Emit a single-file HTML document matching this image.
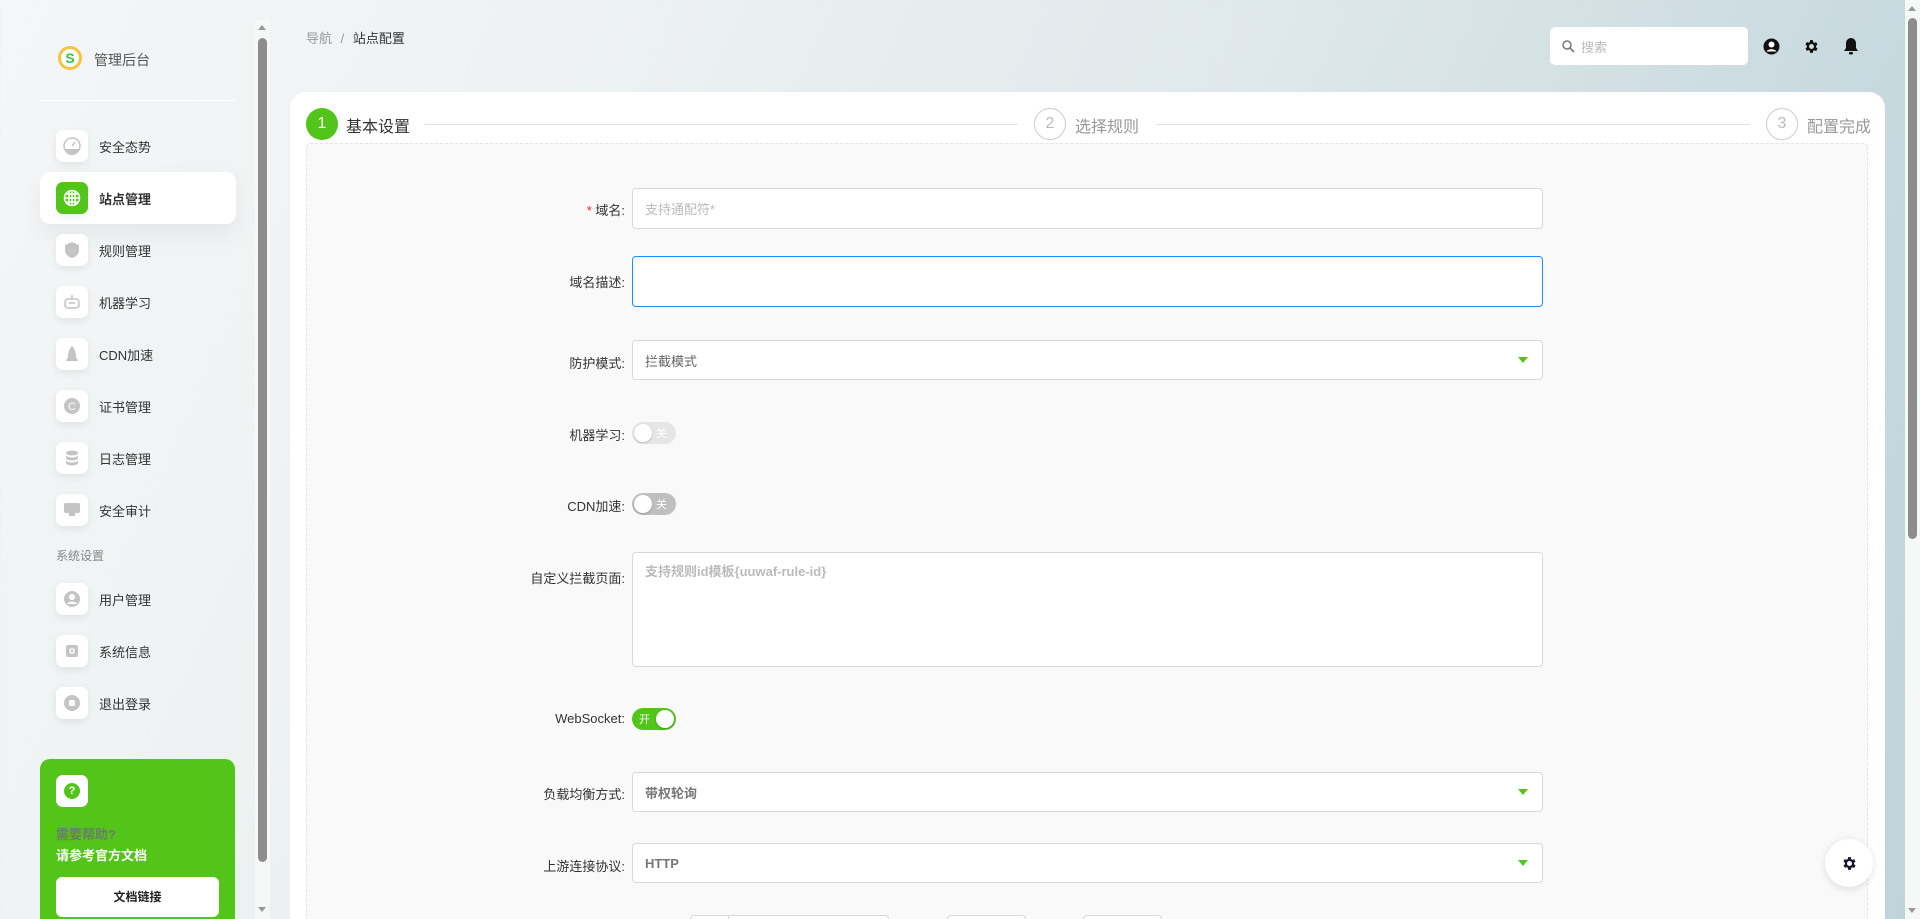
<!DOCTYPE html>
<html><head><meta charset="utf-8"><style>
*{box-sizing:border-box;margin:0;padding:0}
html{width:1920px;height:919px;overflow:hidden}
body{width:1920px;height:919px;overflow:hidden;font-family:"Liberation Sans","Noto Sans CJK SC",sans-serif;background:linear-gradient(115deg,#f4f6f7 0%,#eef2f3 25%,#dfe8eb 55%,#c9dadf 80%,#bfd3d9 100%);position:relative;color:#333}
.abs{position:absolute}
.logo{left:58px;top:46px;width:24px;height:24px;border-radius:50%;border:3px solid #f6c343;display:flex;align-items:center;justify-content:center;color:#3cc24a;font-weight:bold;font-size:14px;background:#fff}
.brand{left:94px;top:50px;font-size:14px;color:#555}
.div{left:40px;top:100px;width:195px;height:1px;background:#fff}
.item{position:absolute;left:56px;display:flex;align-items:center;font-size:13px;color:#333}
.ib{width:32px;height:32px;border-radius:7px;background:#fff;box-shadow:0 3px 8px rgba(0,0,0,.07);display:flex;align-items:center;justify-content:center;margin-right:11px}
.active{left:40px;top:172px;width:196px;height:52px;background:#fff;border-radius:10px;box-shadow:0 10px 25px rgba(0,0,0,.06)}
.sbtrack{left:255px;top:20px;width:15px;height:899px;background:#f6f7f7}
.sbthumb{left:258px;top:38px;width:9px;height:824px;background:#8d8d8d;border-radius:5px}
.help{left:40px;top:759px;width:195px;height:160px;background:#52c41a;border-radius:10px 10px 0 0;overflow:hidden}
.card{left:290px;top:92px;width:1595px;height:827px;background:#fff;border-radius:16px 16px 0 0}
.inner{left:306px;top:143px;width:1562px;height:776px;background:#f9f9f9;border:1px dashed #e4e4e4;border-bottom:none;border-radius:4px 4px 0 0}
.circ{width:32px;height:32px;border-radius:50%;display:flex;align-items:center;justify-content:center;font-size:16px}
.line{height:1px;background:#e3e3e3;top:124px}
.lbl{position:absolute;right:1295px;font-size:13px;color:#333;text-align:right;white-space:nowrap}
.inp{position:absolute;left:632px;width:911px;background:#fff;border:1px solid #d9d9d9;border-radius:4px;font-size:13px;color:#bbb;padding-left:12px;display:flex;align-items:center}
.arrow{position:absolute;right:14px;top:50%;margin-top:-3px;width:0;height:0;border-left:5px solid transparent;border-right:5px solid transparent;border-top:6px solid #52c41a}
.tog{position:absolute;left:632px;width:44px;height:22px;border-radius:11px}
.knob{position:absolute;top:2px;width:18px;height:18px;border-radius:50%;background:#fff;box-shadow:0 1px 2px rgba(0,0,0,.2)}
</style></head><body>
<div class="abs logo">S</div>
<div class="abs brand">管理后台</div>
<div class="abs div"></div>
<div class="abs active"></div>
<div class="item" style="top:130px"><div class="ib"><svg width="18" height="18" viewBox="0 0 18 18"><circle cx="9" cy="9" r="8" fill="none" stroke="#c4c4c4" stroke-width="1.5"/><path d="M2 12h14v2a8 8 0 0 1-14 0z" fill="#c4c4c4"/><path d="M9 9l3-4" stroke="#c4c4c4" stroke-width="1.5"/></svg></div>安全态势</div>
<div class="item" style="top:182px;font-weight:bold"><div class="ib" style="background:#52c41a"><svg width="18" height="18" viewBox="0 0 18 18" fill="none" stroke="#fff" stroke-width="1.5"><circle cx="9" cy="9" r="7.5"/><path d="M1.5 9h15M9 1.5v15M3 5h12M3 13h12M6 2.5v13M12 2.5v13"/></svg></div>站点管理</div>
<div class="item" style="top:234px"><div class="ib"><svg width="16" height="18" viewBox="0 0 16 18"><path d="M8 1l7 3v5c0 4-3 7-7 8-4-1-7-4-7-8V4z" fill="#c4c4c4"/></svg></div>规则管理</div>
<div class="item" style="top:286px"><div class="ib"><svg width="18" height="18" viewBox="0 0 18 18" fill="none" stroke="#c4c4c4" stroke-width="1.5"><rect x="2" y="6" width="14" height="9" rx="3"/><path d="M9 2v4M6 10h6"/></svg></div>机器学习</div>
<div class="item" style="top:338px"><div class="ib"><svg width="14" height="18" viewBox="0 0 14 18"><path d="M7 1c3 3 4 7 4 11l2 4H1l2-4C3 8 4 4 7 1z" fill="#c4c4c4"/></svg></div>CDN加速</div>
<div class="item" style="top:390px"><div class="ib"><svg width="18" height="18" viewBox="0 0 18 18"><circle cx="9" cy="9" r="8" fill="#c4c4c4"/><text x="9" y="13" font-size="11" text-anchor="middle" fill="#fff" font-family="Liberation Sans">C</text></svg></div>证书管理</div>
<div class="item" style="top:442px"><div class="ib"><svg width="14" height="16" viewBox="0 0 14 16"><ellipse cx="7" cy="3" rx="6" ry="2.5" fill="#c4c4c4"/><path d="M1 5v3c0 1.4 2.7 2.5 6 2.5s6-1.1 6-2.5V5c0 1.4-2.7 2.5-6 2.5S1 6.4 1 5zM1 10v3c0 1.4 2.7 2.5 6 2.5s6-1.1 6-2.5v-3c0 1.4-2.7 2.5-6 2.5S1 11.4 1 10z" fill="#c4c4c4"/></svg></div>日志管理</div>
<div class="item" style="top:494px"><div class="ib"><svg width="18" height="16" viewBox="0 0 18 16"><rect x="1" y="1" width="16" height="10" rx="1.5" fill="#c4c4c4"/><rect x="6" y="11" width="6" height="3" fill="#c4c4c4"/></svg></div>安全审计</div>
<div class="abs" style="left:56px;top:547px;font-size:12px;color:#888">系统设置</div>
<div class="item" style="top:583px"><div class="ib"><svg width="18" height="18" viewBox="0 0 18 18"><circle cx="9" cy="9" r="8" fill="#c4c4c4"/><circle cx="9" cy="7" r="3" fill="#fff"/><path d="M4 14c1-3 9-3 10 0" fill="#fff"/></svg></div>用户管理</div>
<div class="item" style="top:635px"><div class="ib"><svg width="18" height="18" viewBox="0 0 18 18"><rect x="3" y="3" width="12" height="12" rx="2" fill="#c4c4c4"/><rect x="6.5" y="6.5" width="5" height="5" fill="#fff"/><rect x="7.8" y="7.8" width="2.4" height="2.4" fill="#c4c4c4"/></svg></div>系统信息</div>
<div class="item" style="top:687px"><div class="ib"><svg width="18" height="18" viewBox="0 0 18 18"><circle cx="9" cy="9" r="8" fill="#c4c4c4"/><rect x="6" y="6" width="6" height="6" rx="1.5" fill="#fff"/></svg></div>退出登录</div>
<div class="abs help">
<div class="abs" style="left:16px;top:16px;width:32px;height:32px;background:#fff;border-radius:7px;display:flex;align-items:center;justify-content:center"><div style="width:16px;height:16px;border-radius:50%;background:#52c41a;color:#fff;font-size:11px;font-weight:bold;text-align:center;line-height:16px">?</div></div>
<div class="abs" style="left:16px;top:65px;font-size:13px;color:#6b7c6b;font-weight:bold">需要帮助?</div>
<div class="abs" style="left:16px;top:86px;font-size:13px;color:#fff;font-weight:bold">请参考官方文档</div>
<div class="abs" style="left:16px;top:118px;width:163px;height:40px;background:#fff;border-radius:6px;text-align:center;line-height:40px;font-size:12px;font-weight:bold;color:#222">文档链接</div>
</div>
<div class="abs sbtrack"></div>
<div class="abs sbthumb"></div>
<div class="abs" style="left:258px;top:25px;border-left:4px solid transparent;border-right:4px solid transparent;border-bottom:5px solid #999"></div>
<div class="abs" style="left:258px;top:907px;border-left:4px solid transparent;border-right:4px solid transparent;border-top:5px solid #999"></div>

<div class="abs" style="left:306px;top:28px;font-size:13px;color:#999">导航 <span style="margin:0 5px">/</span> <span style="color:#333">站点配置</span></div>
<div class="abs" style="left:1550px;top:27px;width:198px;height:38px;background:#fff;border-radius:5px;display:flex;align-items:center;padding-left:12px;font-size:13px;color:#bbb"><svg width="13" height="13" viewBox="0 0 13 13" style="margin-right:6px"><circle cx="5" cy="5" r="4" fill="none" stroke="#777" stroke-width="1.5"/><path d="M8 8l4 4" stroke="#777" stroke-width="1.6"/></svg>搜索</div>
<svg class="abs" style="left:1763px;top:38px" width="17" height="17" viewBox="0 0 17 17"><circle cx="8.5" cy="8.5" r="8" fill="#111"/><circle cx="8.5" cy="6.5" r="3" fill="#fff"/><path d="M3.5 13.5c1.5-3 8.5-3 10 0" fill="#fff"/></svg>
<svg class="abs" style="left:1803px;top:38px" width="17" height="17" viewBox="0 0 24 24"><path fill="#111" d="M19.4 13a7.8 7.8 0 0 0 0-2l2.1-1.6-2-3.5-2.5 1a7 7 0 0 0-1.7-1L15 3h-4l-.4 2.7a7 7 0 0 0-1.7 1l-2.5-1-2 3.5L6.6 11a7.8 7.8 0 0 0 0 2l-2.1 1.6 2 3.5 2.5-1a7 7 0 0 0 1.7 1L11 21h4l.4-2.7a7 7 0 0 0 1.7-1l2.5 1 2-3.5zM13 15.5a3.5 3.5 0 1 1 0-7 3.5 3.5 0 0 1 0 7z" transform="translate(-1 0)"/></svg>
<svg class="abs" style="left:1843px;top:37px" width="16" height="18" viewBox="0 0 16 18"><path d="M8 1a5 5 0 0 1 5 5v5l2 3H1l2-3V6a5 5 0 0 1 5-5z" fill="#111"/><rect x="6" y="15" width="4" height="2.5" rx="1" fill="#111"/></svg>

<div class="abs card"></div>
<div class="abs circ" style="left:306px;top:108px;background:#52c41a;color:#fff">1</div>
<div class="abs" style="left:346px;top:113px;font-size:16px;color:#333">基本设置</div>
<div class="abs line" style="left:425px;width:593px"></div>
<div class="abs circ" style="left:1034px;top:108px;border:1px solid #ccc;color:#bbb">2</div>
<div class="abs" style="left:1075px;top:113px;font-size:16px;color:#999">选择规则</div>
<div class="abs line" style="left:1155px;width:595px"></div>
<div class="abs circ" style="left:1766px;top:108px;border:1px solid #ccc;color:#bbb">3</div>
<div class="abs" style="left:1807px;top:113px;font-size:16px;color:#999">配置完成</div>
<div class="abs inner"></div>

<div class="lbl" style="top:200px"><span style="color:#f5222d">* </span>域名:</div>
<div class="inp" style="top:188px;height:41px">支持通配符*</div>
<div class="lbl" style="top:272px">域名描述:</div>
<div class="inp" style="top:256px;height:51px;border-color:#1890ff"></div>
<div class="lbl" style="top:353px">防护模式:</div>
<div class="inp" style="top:340px;height:40px;color:#666">拦截模式<div class="arrow"></div></div>
<div class="lbl" style="top:425px">机器学习:</div>
<div class="tog" style="top:422px;background:#e6e6e6"><div class="knob" style="left:2px"></div><span class="abs" style="left:24px;top:3px;font-size:11px;color:#fff">关</span></div>
<div class="lbl" style="top:496px">CDN加速:</div>
<div class="tog" style="top:493px;background:#bfbfbf"><div class="knob" style="left:2px"></div><span class="abs" style="left:24px;top:3px;font-size:11px;color:#fff">关</span></div>
<div class="lbl" style="top:568px">自定义拦截页面:</div>
<div class="inp" style="top:552px;height:115px;align-items:flex-start;padding-top:8px;color:#bbb;font-weight:bold">支持规则id模板{uuwaf-rule-id}</div>
<div class="lbl" style="top:711px">WebSocket:</div>
<div class="tog" style="top:708px;background:#52c41a"><div class="knob" style="left:24px"></div><span class="abs" style="left:7px;top:3px;font-size:11px;color:#fff">开</span></div>
<div class="lbl" style="top:784px">负载均衡方式:</div>
<div class="inp" style="top:772px;height:40px;color:#777;font-weight:bold">带权轮询<div class="arrow"></div></div>
<div class="lbl" style="top:856px">上游连接协议:</div>
<div class="inp" style="top:843px;height:40px;color:#777;font-weight:bold">HTTP<div class="arrow"></div></div>
<div class="abs" style="left:690px;top:915px;width:199px;height:4px;background:#fff;border:1px solid #d9d9d9;border-bottom:none;border-radius:4px 4px 0 0"><div style="position:absolute;left:37px;top:0;width:1px;height:4px;background:#d9d9d9"></div></div>
<div class="abs" style="left:947px;top:915px;width:79px;height:4px;background:#fff;border:1px solid #d9d9d9;border-bottom:none;border-radius:4px 4px 0 0"></div>
<div class="abs" style="left:1083px;top:915px;width:79px;height:4px;background:#fff;border:1px solid #d9d9d9;border-bottom:none;border-radius:4px 4px 0 0"></div>

<div class="abs" style="left:1825px;top:839px;width:48px;height:48px;border-radius:50%;background:#fff;box-shadow:0 2px 8px rgba(0,0,0,.12);display:flex;align-items:center;justify-content:center"><svg width="17" height="17" viewBox="0 0 24 24"><path fill="#1a1a2e" d="M19.4 13a7.8 7.8 0 0 0 0-2l2.1-1.6-2-3.5-2.5 1a7 7 0 0 0-1.7-1L15 3h-4l-.4 2.7a7 7 0 0 0-1.7 1l-2.5-1-2 3.5L6.6 11a7.8 7.8 0 0 0 0 2l-2.1 1.6 2 3.5 2.5-1a7 7 0 0 0 1.7 1L11 21h4l.4-2.7a7 7 0 0 0 1.7-1l2.5 1 2-3.5zM13 15.5a3.5 3.5 0 1 1 0-7 3.5 3.5 0 0 1 0 7z" transform="translate(-1 0)"/></svg></div>

<div class="abs" style="left:1905px;top:0;width:15px;height:919px;background:#f6f7f7"></div>
<div class="abs" style="left:1908px;top:18px;width:9px;height:521px;background:#8d8d8d;border-radius:5px"></div>
<div class="abs" style="left:1908px;top:6px;border-left:4px solid transparent;border-right:4px solid transparent;border-bottom:5px solid #999"></div>
<div class="abs" style="left:1908px;top:908px;border-left:4px solid transparent;border-right:4px solid transparent;border-top:5px solid #999"></div>
</body></html>
